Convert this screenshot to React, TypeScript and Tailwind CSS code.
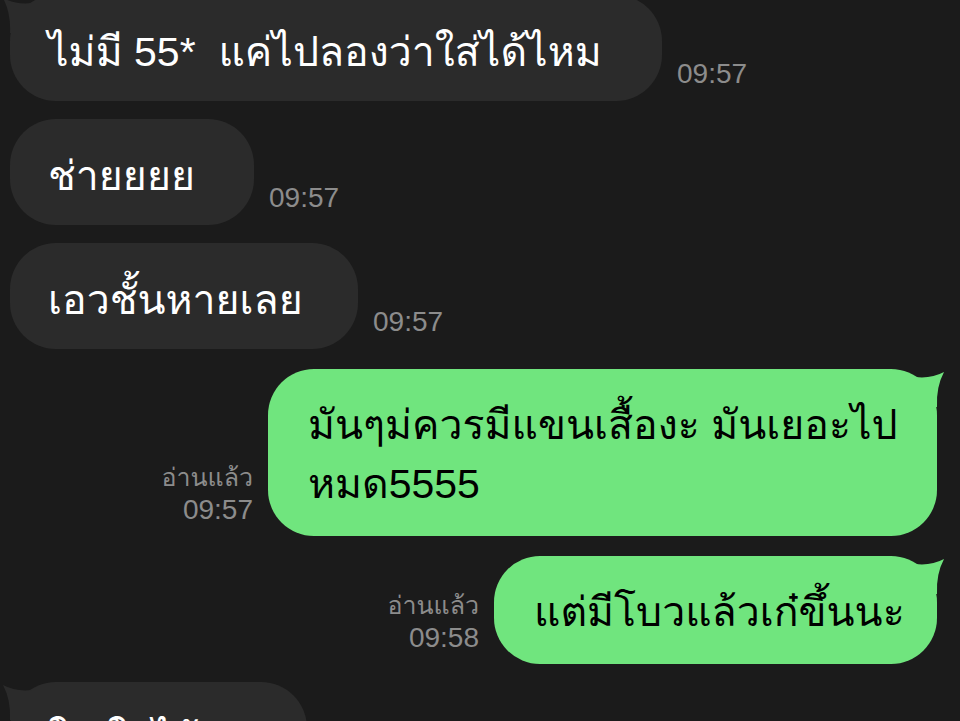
const font = "font-['Liberation_Sans','Loma','Noto_Sans_Thai_Looped',sans-serif]"

function TailLeft({ color }: { color: string }) {
  return (
    <svg className="absolute -left-[8px] top-0" width="40" height="40" viewBox="0 0 40 40">
      <path d="M1 3 Q 14 10 30 8 L 30 38 L 8 38 Q 9 18 1 3 Z" fill={color} />
    </svg>
  )
}

function TailRight({ color }: { color: string }) {
  return (
    <svg className="absolute -right-[8px] top-0" width="40" height="40" viewBox="0 0 40 40">
      <path d="M39 3 Q 26 10 10 8 L 10 38 L 32 38 Q 31 18 39 3 Z" fill={color} />
    </svg>
  )
}

function Incoming({ text, time, width, tail }: { text: string; time?: string; width: string; tail?: boolean }) {
  return (
    <div className="flex items-end gap-[15px] pl-[10px]">
      <div className={`relative ${width} rounded-[46px] bg-[#2b2b2b] pl-[38px] pr-[30px] pt-[28px] pb-[20px] text-[41px] leading-[58px] text-white whitespace-pre`}>
        {tail && <TailLeft color="#2b2b2b" />}
        <span className="relative">{text}</span>
      </div>
      {time && <span className="mb-[12px] text-[28px] leading-[30px] text-[#8c8c8c]">{time}</span>}
    </div>
  )
}

function Outgoing({ lines, time, width }: { lines: string[]; time: string; width: string }) {
  return (
    <div className="flex items-end justify-end gap-[15px] pr-[23px]">
      <div className="mb-[10px] flex flex-col items-end text-[#8c8c8c]">
        <span className="text-[25px] leading-[34px]">อ่านแล้ว</span>
        <span className="text-[28px] leading-[32px]">{time}</span>
      </div>
      <div className={`relative ${width} rounded-[46px] bg-[#70e57e] pl-[40px] pr-[30px] pt-[27px] pb-[22px] text-[41px] leading-[59px] text-black whitespace-nowrap`}>
        <TailRight color="#70e57e" />
        {lines.map((l) => (
          <div key={l} className="relative">{l}</div>
        ))}
      </div>
    </div>
  )
}

export default function App() {
  return (
    <div className={`h-[721px] w-[960px] overflow-hidden bg-[#1b1b1b] ${font}`}>
      <div className="-mt-[5px] flex flex-col gap-[18px]">
        <Incoming text="ไม่มี 55*  แค่ไปลองว่าใส่ได้ไหม" time="09:57" width="w-[652px]" tail />
        <Incoming text="ช่ายยยย" time="09:57" width="w-[244px]" />
        <Incoming text="เอวชั้นหายเลย" time="09:57" width="w-[348px]" />
        <div className="mt-[2px]">
          <Outgoing lines={['มันๆม่ควรมีแขนเสื้องะ มันเยอะไป', 'หมด5555']} time="09:57" width="w-[669px]" />
        </div>
        <div className="mt-[2px]">
          <Outgoing lines={['แต่มีโบวแล้วเก๋ขึ้นนะ']} time="09:58" width="w-[443px]" />
        </div>
        <Incoming text="ใช่ ใส่ได้อยู่" width="w-[297px]" tail />
      </div>
    </div>
  )
}
